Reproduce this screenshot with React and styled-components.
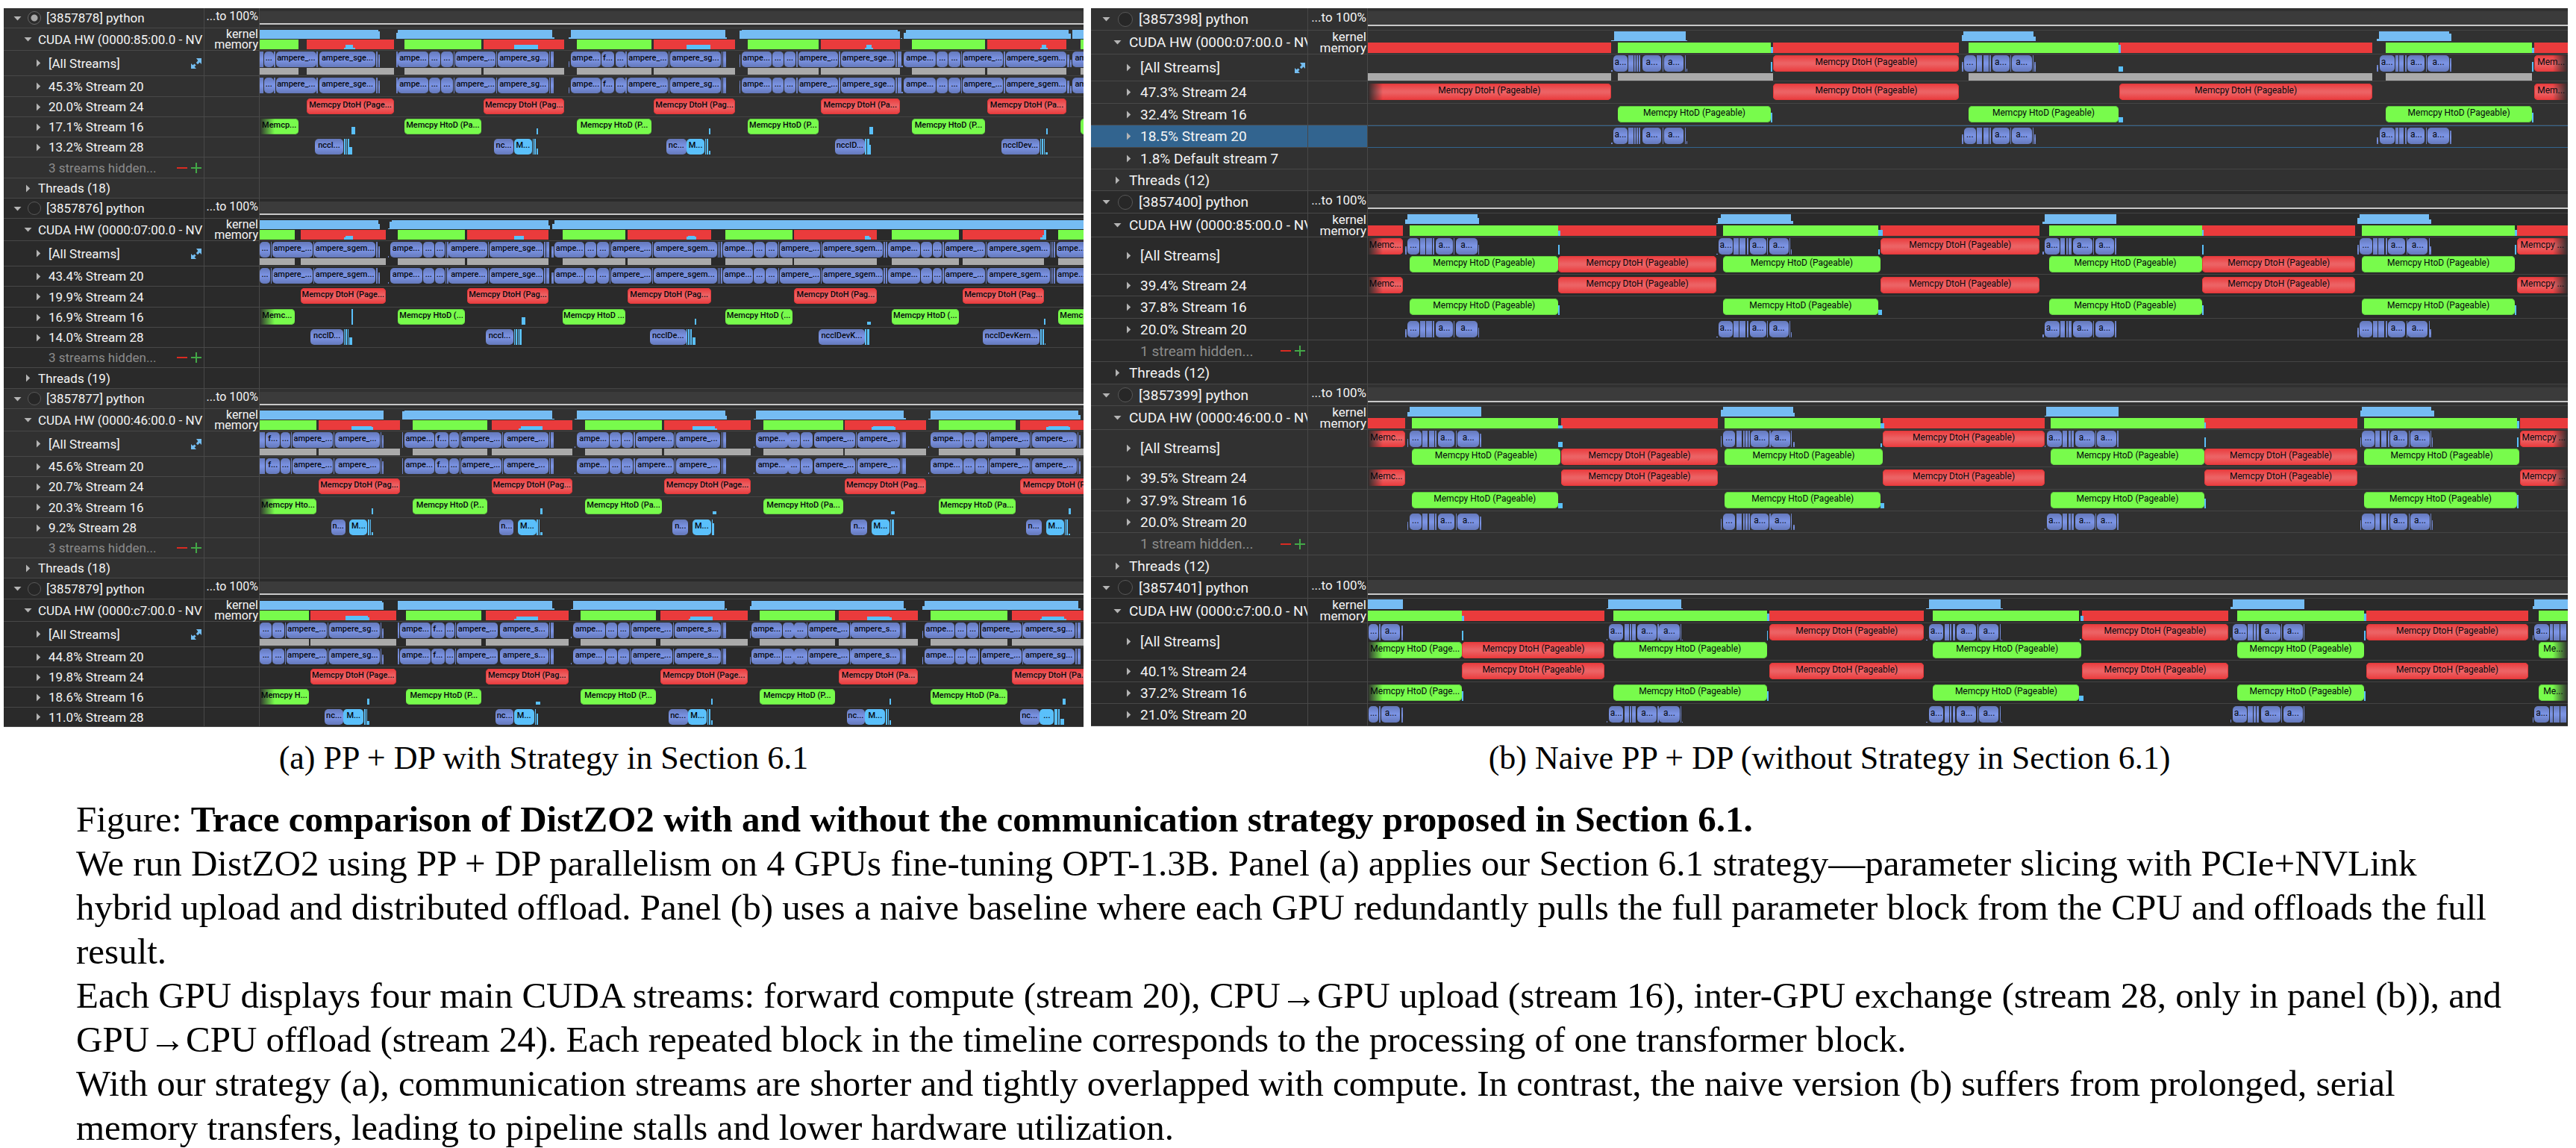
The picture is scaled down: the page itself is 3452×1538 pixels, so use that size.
import React from "react";
import styled, { createGlobalStyle, css } from "styled-components";

/* Times are in trace ticks. An event reads "start-end@height:label"; height is a percentage. */
const parse = (kind, source, extra = {}) =>
  source
    .split(";")
    .filter(Boolean)
    .map((item) => {
      const [, start, end, height, label] = item.match(/^(\d+)-(\d+)(?:@(\d+))?(?::(.*))?$/);
      return { kind, start: +start, end: +end, height: height ? +height : 100, label, ...extra };
    });

const kernels = (s) => parse("kernel", s);
const dtoh = (s, extra) => parse("dtoh", s, extra);
const htod = (s, extra) => parse("htod", s, extra);
const peer = (s) => parse("peer", s);
const usage = (s) => parse("usage", s);
const flat = (kind, events) => events.filter((e) => e.end - e.start > 12).map((e) => ({ ...e, kind, label: undefined, fade: undefined }));

const D = "Memcpy DtoH (Pageable)";
const H = "Memcpy HtoD (Pageable)";

const slicedProcess = ({ pid, bus, pinned, heights, shares, threads, busy, kernel, down, up, ticks, bumps, nccl, copies }) => {
  const k = kernels(kernel);
  const d = dtoh(down);
  const h = htod(up).map((e) => (e.start === 0 ? { ...e, fade: "left" } : e));
  const rows = [
    { type: "process", label: `[${pid}] python`, pinned },
    {
      type: "device",
      label: `CUDA HW (0000:${bus}:00.0 - NV`,
      lanes: [usage(busy), [...flat("downUse", d), ...flat("upUse", h), ...peer(bumps)]],
    },
    { type: "all", label: "[All Streams]", expand: true, lanes: [k, [...flat("merged", d), ...flat("merged", h)]], slimLast: true },
    { type: "stream", label: `${shares[0]}% Stream 20`, lanes: [k] },
    { type: "stream", label: `${shares[1]}% Stream 24`, lanes: [d] },
    { type: "stream", label: `${shares[2]}% Stream 16`, lanes: [[...h, ...peer(ticks)]] },
    { type: "stream", label: `${shares[3]}% Stream 28`, lanes: [[...kernels(nccl), ...peer(copies)]] },
  ];
  if (threads) {
    rows.push({ type: "hidden", label: "3 streams hidden..." }, { type: "threads", label: `Threads (${threads})` });
  }
  return rows.map((row, i) => ({ ...row, height: heights[i] }));
};

const leftGroups = [
  slicedProcess({
    pid: 3857878, bus: "85", pinned: true, threads: 18,
    heights: [27, 30, 34, 28, 27, 27, 27, 28, 27],
    shares: ["45.3", "20.0", "17.1", "13.2"],
    busy: "0-336;336-341@85;387-392@65;392-831;831-837@15;877-883@20;883-1321;1321-1326@15;1362-1368@90;1368-1812;1812-1818@85;1820-1824@10;1828-1834@70;1834-2297;2297-2303@60;2307-2339",
    kernel:
      "0-10;12-40:...;41-44;47-160:ampere_...;162-166;169-329:ampere_sge...;331-334;336-341@80;387-391;393-478:ampe...;480-513:...;515-548:...;550-553;556-669:ampere_...;671-674;676-819:ampere_sg...;821-824;826-835;877-880@40;883-968:ampe...;970-1007:f...;1010-1038:...;1039-1042;1045-1158:ampere_...;1160-1163;1166-1309:ampere_sg...;1311-1314;1316-1325;1362-1365@80;1368-1453:ampe...;1455-1487:...;1489-1522:...;1523-1527;1530-1643:ampere_...;1645-1648;1650-1804:ampere_sge...;1806-1809;1811-1821;1822-1826@10;1829-1920:ampe...;1922-1954:...;1956-1989:...;1991-1994;1996-2111:ampere_...;2113-2116;2118-2290:ampere_sgem...;2293-2298@80;2300-2306@50;2308-2399:ampe...",
    down: "134-381:Memcpy DtoH (Page...;636-865:Memcpy DtoH (Pag...;1119-1350:Memcpy DtoH (Pag...;1593-1817:Memcpy DtoH (Pa...;2066-2290:Memcpy DtoH (Pa...",
    up: "0-111:Memcp...;410-630:Memcpy HtoD (Pa...;900-1113:Memcpy HtoD (P...;1385-1587:Memcpy HtoD (P...;1852-2059:Memcpy HtoD (P...;2331-2545",
    ticks: "260-271@50;785-790@40;1275-1279@40;1731-1742@50;2233-2237@40",
    bumps: "239-272@18;243-265@45;722-791@45;1212-1280@45;1719-1742@18;1723-1738@45;2216-2237@18;2220-2234@45",
    nccl: "157-237:nccl...;665-721:nc...;1155-1211:nc...;1633-1718:ncclD...;2106-2214:ncclDev...",
    copies: "239-243;245-248;250-254;255-263@50;722-773:M...;775-778;780-783;785-790@40;1212-1263:M...;1265-1268;1270-1274;1275-1280@25;1719-1723;1725-1730;1731-1735@60;2216-2219;2221-2224;2226-2229;2231-2237@15",
  }),
  slicedProcess({
    pid: 3857876, bus: "07", threads: 19,
    heights: [27, 30, 34, 27, 28, 27, 27, 27, 28],
    shares: ["43.4", "19.9", "16.9", "14.0"],
    busy: "0-336;336-341@60;364-369@10;369-375@85;375-820;820-825@45;831-837@60;837-2339",
    kernel:
      "0-30:...;32-34;36-151:ampere_...;152-154;155-329:ampere_sgem...;331-334;336-341@70;364-367@10;370-461:ampe...;463-496:...;498-525:...;527-530;532-535;537-647:ampere...;649-651;653-806:ampere_sge...;808-811;813-822;829-834@70;837-922:ampe...;924-956:...;958-991:...;993-995;998-1113:ampere_...;1115-1117;1119-1298:ampere_sgem...;1300-1303;1305-1308;1310-1314;1316-1401:ampe...;1403-1435:...;1437-1470:...;1472-1474;1477-1592:ampere_...;1594-1596;1598-1770:ampere_sgem...;1772-1775;1777-1781;1784-1875:ampe...;1877-1909:...;1911-1937:...;1939-1942;1944-2059:ampere_...;2061-2063;2066-2243:ampere_sgem...;2245-2248;2250-2253;2255-2258;2262-2347:ampe...",
    down: "116-358:Memcpy DtoH (Page...;589-820:Memcpy DtoH (Pag...;1044-1281:Memcpy DtoH (Pag...;1518-1753:Memcpy DtoH (Pag...;1996-2227:Memcpy DtoH (Pag...",
    up: "0-99:Memc...;392-583:Memcpy HtoD (...;860-1038:Memcpy HtoD ...;1321-1512:Memcpy HtoD (...;1794-1985:Memcpy HtoD (...;2267-2458:Memcpy HtoD (...",
    ticks: "260-264;744-755@50;1235-1240@40;1724-1735@20;2227-2232@40",
    bumps: "239-265@20;243-265@38;722-750@40;1212-1240@30;1217-1235@42;1719-1736@20;1719-1731@42;2216-2228@20;2222-2228@50;2227-2233@100",
    nccl: "145-237:ncclD...;641-721:nccl...;1108-1211:ncclDe...;1587-1718:ncclDevK...;2054-2214:ncclDevKern...",
    copies: "239-242;244-247;249-253;254-263@50;722-725;727-730;732-736;738-743;1212-1215;1217-1220;1222-1226;1228-1237@50;1719-1723;1725-1730;2216-2220;2222-2226;2228-2232@10",
  }),
  slicedProcess({
    pid: 3857877, bus: "46", threads: 18,
    heights: [27, 30, 34, 27, 27, 28, 27, 27, 27],
    shares: ["45.6", "20.7", "20.3", "9.2"],
    busy: "0-352;405-410@90;410-831;831-837@10;895-900@10;900-1321;1321-1326@40;1402-1408@10;1408-1829;1829-1835@20;1898-1904@10;1904-2325;2325-2331@50",
    kernel:
      "0-14;17-58:f...;60-86:...;88-91;94-208:ampere_...;210-212;214-341:ampere_...;343-346;348-351@80;404-407;410-496:ampe...;498-536:f...;538-565:...;567-569;571-686:ampere_...;688-690;693-819:ampere_...;821-824;826-835;894-897@10;901-992:ampe...;994-1025:...;1027-1060:...;1062-1065;1068-1176:ampere...;1178-1180;1183-1308:ampere_...;1311-1314;1316-1325;1402-1405@10;1408-1499:ampe...;1501-1533:...;1535-1569:...;1571-1573;1575-1690:ampere_...;1692-1694;1697-1818:ampere_...;1820-1823;1825-1834;1898-1901@10;1905-1995:ampe...;1997-2029:...;2031-2065:...;2067-2069;2071-2186:ampere_...;2188-2190;2192-2319:ampere_...;2321-2324;2326-2331@80",
    down: "168-398:Memcpy DtoH (Pag...;658-888:Memcpy DtoH (Pag...;1148-1395:Memcpy DtoH (Page...;1661-1891:Memcpy DtoH (Pag...;2158-2398:Memcpy DtoH (Pag...",
    up: "0-161:Memcpy Hto...;434-647:Memcpy HtoD (P...;924-1142:Memcpy HtoD (Pa...;1431-1656:Memcpy HtoD (Pa...;1927-2146:Memcpy HtoD (Pa...",
    ticks: "318-323@40;797-802@40;1285-1297@20;1793-1804@20;2297-2302@40",
    bumps: "260-323@30;260-317@42;735-802@15;741-802@42;1229-1299@15;1229-1293@42;1737-1805@30;1742-1800@42;2233-2301@30;2239-2296@42",
    nccl: "203-243:n...;681-721:n...;1172-1217:n...;1679-1725:n...;2175-2220:n...",
    copies: "255-306:M...;308-311;313-316;318-323@20;734-785:M...;787-790;792-795;797-802@20;1229-1281:M...;1283-1286;1287-1291@75;1737-1788:M...;1790-1793;1795-1800;2233-2284:M...;2286-2289;2291-2295;2297-2301@10",
  }),
  slicedProcess({
    pid: 3857879, bus: "c7",
    heights: [28, 30, 34, 27, 27, 27, 26],
    shares: ["44.8", "19.8", "18.6", "11.0"],
    busy: "0-347;347-352@80;393-831;831-837@15;883-889@10;889-1321;1321-1326@15;1391-1396@40;1396-1829;1829-1835@15;1881-1887@40;1887-2325;2325-2331@20",
    kernel:
      "1-34:...;36-70:...;72-74;76-191:ampere_...;193-195;197-341:ampere_sg...;343-346;348-351@60;392-396;399-485:ampe...;487-525:f...;527-554:...;556-558;560-675:ampere_...;677-679;682-819:ampere_s...;821-824;826-835;883-886@10;889-980:ampe...;982-1014:...;1016-1049:...;1051-1053;1056-1171:ampere_...;1173-1175;1177-1309:ampere_s...;1311-1314;1316-1325;1391-1394@50;1397-1483:ampe...;1485-1516:...;1518-1552:...;1554-1556;1557-1673:ampere_...;1675-1677;1678-1818:ampere_s...;1820-1823;1825-1834;1881-1884@50;1887-1973:ampe...;1975-2006:...;2008-2041:...;2043-2045;2048-2163:ampere_...;2165-2167;2168-2314:ampere_sg...;2316-2319;2321-2331",
    down: "144-387:Memcpy DtoH (Page...;641-877:Memcpy DtoH (Pag...;1137-1385:Memcpy DtoH (Page...;1644-1869:Memcpy DtoH (Pa...;2135-2360:Memcpy DtoH (Pa...",
    up: "0-139:Memcpy H...;416-630:Memcpy HtoD (P...;911-1125:Memcpy HtoD (P...;1419-1633:Memcpy HtoD (P...;1904-2123:Memcpy HtoD (Pa...",
    ticks: "306-311@40;784-796@20;1281-1285@40;1788-1793@40;2279-2288@40",
    bumps: "243-312@30;243-307@45;723-791@15;728-791@42;1218-1286@15;1223-1286@42;1725-1794@30;1725-1789@42;2216-2290@15;2221-2284@42",
    nccl: "185-237:nc...;670-721:nc...;1160-1216:nc...;1667-1718:nc...;2158-2214:nc...",
    copies: "238-295:M...;297-300;302-305;306-311@25;722-779:M...;781-784;786-790@70;1217-1269:M...;1271-1274;1276-1279;1281-1285@30;1719-1776:M...;1778-1781;1783-1787;1788-1793@30;2215-2255:...;2256-2264;2266-2272;2273-2283@40",
  }),
];

const firstNaive = () => {
  const k = kernels(
    "511-514@10;515-545:a...;547-557;559-562;564-567;569-572;576-616:a...;618-620;621-663:a...;665-667;668-670@20;1246-1249@60;1251-1276:...;1278-1289;1292-1303;1305-1308;1310-1346:a...;1348-1350;1351-1393:a...;1395-1397;1398-1401@60;2117-2120@40;2123-2154:a...;2156-2162;2164-2174;2176-2179;2182-2218:a...;2220-2222;2224-2269:a...;2271-2274@80"
  );
  const head = dtoh(`0-510:${D}`, { fade: "left" });
  const mid = dtoh(`851-1241:${D}`);
  const late = dtoh(`1577-2108:${D}`);
  const tail = dtoh("2448-2518:Mem...", { fade: "right" });
  const up = htod(`524-846:${H};1260-1576:${H};2136-2443:${H}`);
  const ticks = peer("846-849@60;1576-1584@30;2443-2446@60");
  const down = [...head, ...mid, ...late, ...tail];
  return [
    { type: "process", label: "[3857398] python", height: 30 },
    {
      type: "device", label: "CUDA HW (0000:07:00.0 - NV", height: 32,
      lanes: [
        usage("511-516@5;516-667;667-671@5;1246-1250@60;1250-1397;1397-1402@50;2117-2122@25;2122-2269;2269-2274@80"),
        [...flat("downUse", down), ...flat("upUse", up), ...peer("846-850@60;1576-1580@80;2443-2447@50")],
      ],
    },
    {
      type: "all", label: "[All Streams]", expand: true, height: 36, slimLast: true,
      lanes: [[...k, ...mid, ...tail, ...ticks], parse("merged", "0-510;524-850;1260-2108;2136-2443")],
    },
    { type: "stream", label: "47.3% Stream 24", height: 30, lanes: [down] },
    { type: "stream", label: "32.4% Stream 16", height: 29, lanes: [[...up, ...ticks]] },
    { type: "stream", label: "18.5% Stream 20", height: 30, lanes: [k], selected: true },
    { type: "stream", label: "1.8% Default stream 7", height: 29 },
    { type: "threads", label: "Threads (12)", height: 29 },
  ];
};

const naiveProcess = ({ pid, bus, heights, shares, hidden, busy, use, kernel, upper, lower, down, up, ticks, upperTicks }) => {
  const k = kernels(kernel);
  const edge = (events) =>
    events.map((e) => (e.start === 0 ? { ...e, fade: "left" } : e.end === 2518 ? { ...e, fade: "right" } : e));
  const copies = ({ d = "", h = "" }) => edge([...dtoh(d), ...htod(h)]);
  const rows = [
    { type: "process", label: `[${pid}] python` },
    {
      type: "device", label: `CUDA HW (0000:${bus}:00.0 - NV`,
      lanes: [usage(busy), [...flat("downUse", dtoh(down)), ...flat("upUse", htod(up)), ...peer(use)]],
    },
    { type: "all", label: "[All Streams]", lanes: [[...k, ...copies(upper), ...peer(upperTicks)], copies(lower)] },
    { type: "stream", label: `${shares[0]}% Stream 24`, lanes: [edge(dtoh(down))] },
    { type: "stream", label: `${shares[1]}% Stream 16`, lanes: [[...edge(htod(up)), ...peer(ticks)]] },
    { type: "stream", label: `${shares[2]}% Stream 20`, lanes: [k] },
  ];
  if (hidden) rows.push({ type: "hidden", label: "1 stream hidden..." }, { type: "threads", label: "Threads (12)" });
  return rows.map((row, i) => ({ ...row, height: heights[i] }));
};

const rightGroups = [
  firstNaive(),
  naiveProcess({
    pid: 3857400, bus: "85", hidden: true,
    heights: [30, 32, 50, 29, 30, 29, 29, 30],
    shares: ["39.4", "37.8", "20.0"],
    busy: "79-83@50;83-230;230-234@60;731-735@5;735-740@60;740-888;888-892@30;1416-1420@20;1420-1571;2076-2081@60;2081-2227;2227-2232@50",
    use: "400-404@50;1071-1080@60;1750-1754@60;2407-2411@60",
    kernel:
      "78-81@50;83-108:...;110-120;122-135;137-140;143-178:a...;180-182;184-230:a...;231-234@60;731-734@5;736-766:a...;768-778;780-792;795-798;801-836:a...;838-840;842-883:a...;885-887;888-890@30;1416-1418@20;1420-1451:a...;1453-1463;1465-1469;1471-1477;1480-1520:a...;1522-1524;1526-1566:a...;1568-1571;2076-2079@60;2081-2107:...;2109-2119;2121-2133;2136-2139;2141-2177:a...;2179-2181;2182-2224:a...;2226-2228;2229-2231@50",
    upper: { d: `0-73:Memc...;1076-1410:${D};2411-2518:Memcpy ...` },
    upperTicks: "400-403@60;1071-1074@30;1750-1754@60;2407-2410@60",
    lower: { d: `400-731:${D};1751-2072:${D}`, h: `88-400:${H};745-1076:${H};1429-1750:${H};2086-2407:${H}` },
    down: `0-73:Memc...;400-731:${D};1076-1410:${D};1751-2072:${D};2411-2518:Memcpy ...`,
    up: `88-400:${H};745-1071:${H};1429-1750:${H};2086-2407:${H}`,
    ticks: "400-403@60;1071-1079@30;1750-1754@60;2407-2410@60",
  }),
  naiveProcess({
    pid: 3857399, bus: "46", hidden: true,
    heights: [29, 32, 50, 30, 29, 29, 30, 29],
    shares: ["39.5", "37.9", "20.0"],
    busy: "83-88@50;88-238;741-745@70;745-892;892-896@40;1420-1424@10;1424-1576;2082-2086@60;2086-2232;2232-2237@60",
    use: "399-408@30;1076-1084@50;1755-1759@60;2411-2416@70",
    kernel:
      "83-85@50;87-113:...;115-126;128-139;141-144;147-182:a...;184-186;188-234:a...;235-238@80;741-743@70;745-771:...;773-785;787-791;793-797;799-802;804-841:a...;843-845;846-886:a...;888-890;892-895@30;1420-1422@10;1425-1456:a...;1458-1468;1470-1475;1477-1482;1484-1525:a...;1527-1529;1530-1570:a...;1572-1575;2082-2084@60;2086-2112:...;2114-2124;2127-2138;2140-2143;2146-2182:a...;2184-2186;2187-2229:a...;2230-2232;2233-2235@60",
    upper: { d: `0-78:Memc...;1081-1420:${D};2417-2518:Memcpy ...` },
    upperTicks: "400-408@30;1076-1079@25;1755-1758@60;2411-2415@60",
    lower: { d: `405-735:${D};1756-2076:${D}`, h: `92-404:${H};749-1080:${H};1433-1755:${H};2091-2416:${H}` },
    down: `0-78:Memc...;405-735:${D};1081-1420:${D};1756-2076:${D};2417-2518:Memcpy ...`,
    up: `92-399:${H};749-1076:${H};1433-1755:${H};2091-2411:${H}`,
    ticks: "399-408@30;1076-1084@30;1755-1758@60;2411-2415@80",
  }),
  naiveProcess({
    pid: 3857401, bus: "c7",
    heights: [29, 33, 50, 29, 29, 30],
    shares: ["40.1", "37.2", "21.0"],
    busy: "0-73;501-505@10;505-658;658-661@5;1172-1177@5;1177-1328;1328-1332@5;1810-1815@20;1815-1966;2444-2448@30;2448-2518",
    use: "197-202@50;837-842@70;1495-1502@50;2090-2095@70",
    kernel:
      "2-22:...;24-26;28-68:a...;70-73@90;501-503@10;506-536:a...;538-548;550-553;555-562;566-606:a...;608-610;611-654:a...;656-658;659-661@5;1172-1174@5;1178-1208:a...;1210-1220;1222-1225;1227-1233;1236-1277:a...;1279-1281;1283-1324:a...;1326-1328;1329-1331@5;1810-1812@20;1815-1845:a...;1847-1857;1859-1863;1865-1870;1874-1915:a...;1917-1919;1921-1962:a...;1964-1966;2444-2446@30;2448-2479:a...;2481-2487;2489-2501;2503-2515",
    upper: { d: `843-1167:${D};1498-1806:${D};2095-2435:${D}` },
    upperTicks: "198-201@60;837-840@60;1494-1497@10;2091-2094@60",
    lower: { d: `198-497:${D}`, h: `0-198:Memcpy HtoD (Page...;515-837:${H};1186-1497:${H};1824-2091:${H};2457-2518:Me...` },
    down: `198-497:${D};843-1167:${D};1498-1806:${D};2095-2435:${D}`,
    up: `0-198:Memcpy HtoD (Page...;515-837:${H};1186-1493:${H};1824-2091:${H};2457-2518:Me...`,
    ticks: "198-201@60;838-841@60;1493-1501@30;2091-2094@60",
  }),
];

const compact = {
  ticks: 2339, font: 17, small: 16, smallLine: 14, tiny: 11, tinyWeight: 500, labelCol: 269, valueCol: 74,
  indents: [11, 25, 39], arrow: 14, gap: 7, dial: 18,
  bar: 21, slim: 9, laneGap: 1, kernelUse: 12, memoryUse: 13, useTop: 2, streamTop: 2, allTop: 1, textLine: 18,
  bandTop: 4, band: 16,
};
const roomy = {
  ticks: 2518, font: 19, small: 17, smallLine: 15, tiny: 12, tinyWeight: 400, labelCol: 291, valueCol: 80,
  indents: [12, 27, 42], arrow: 16, gap: 8, dial: 20,
  bar: 22, slim: 10, laneGap: 2, kernelUse: 13, memoryUse: 14, useTop: 1, streamTop: 3, allTop: 1, textLine: 19,
  bandTop: 4, band: 18,
};

const GlobalStyle = createGlobalStyle`
  *, *::before, *::after { box-sizing: border-box; }
  body { margin: 0; background: #fff; }
`;

const Page = styled.main`
  padding: 11px 11px 0 5px;
  color: #000;
  font-family: "Liberation Serif", "Times New Roman", serif;
`;

const Comparison = styled.div`
  display: grid;
  grid-template-columns: minmax(0, 1447fr) minmax(0, 1979fr);
  gap: 10px;
`;

const Figure = styled.figure`
  margin: 0;
  display: flex;
  flex-direction: column;
  justify-content: space-between;
`;

const Caption = styled.figcaption`
  padding-top: 13px;
  font-size: 44px;
  line-height: 58px;
  text-align: center;
`;

const Trace = styled.div`
  overflow: hidden;
  background: #2a2a2a;
  color: #f4f4f4;
  font-family: Roboto, "Liberation Sans", sans-serif;
`;

const Group = styled.section`
  background: ${(p) => (p.$dark ? "#2a2a2a" : "#313131")};
`;

const Row = styled.div`
  display: grid;
  grid-template-columns: ${(p) => p.$s.labelCol}px ${(p) => p.$s.valueCol}px minmax(0, 1fr);
  height: ${(p) => p.$h}px;
`;

const cell = css`
  border-bottom: 1px solid #484848;
  background: ${(p) => (p.$selected ? "#32648f" : "transparent")};
`;

const LabelCell = styled.div`
  ${cell}
  display: flex;
  align-items: center;
  gap: ${(p) => p.$s.gap}px;
  padding-left: ${(p) => p.$s.indents[p.$level]}px;
  border-right: 1px solid #484848;
  overflow: hidden;
  white-space: nowrap;
  font-size: ${(p) => p.$s.font}px;
  color: ${(p) => (p.$muted ? "#8c8c8c" : "inherit")};
`;

const PlainButton = styled.button`
  flex: none;
  display: flex;
  align-items: center;
  justify-content: center;
  padding: 0;
  border: 0;
  background: none;
  cursor: pointer;
`;

const Arrow = styled(PlainButton)`
  width: ${(p) => p.$s.arrow}px;
  height: 20px;
`;

const Spacer = styled.span`
  flex: none;
  width: ${(p) => p.$s.arrow}px;
`;

const Name = styled.span`
  flex: 1 0 auto;
`;

const ProcessName = styled.label`
  display: flex;
  align-items: center;
  gap: ${(p) => p.$s.gap}px;
`;

const Dial = styled.input`
  appearance: none;
  margin: 0;
  width: ${(p) => p.$s.dial}px;
  height: ${(p) => p.$s.dial}px;
  border: 1px solid #585858;
  border-radius: 50%;
  background: #272727;
  &:checked {
    border-color: #686868;
    background: radial-gradient(circle, #a8a8a8 0 4px, #2b2b2b 5px);
  }
`;

const Tools = styled.span`
  flex: none;
  display: flex;
  gap: 5px;
  padding-right: 3px;
`;

const ValueCell = styled.div`
  ${cell}
  display: flex;
  flex-direction: column;
  justify-content: center;
  align-items: flex-end;
  padding-right: 1px;
  padding-bottom: ${(p) => (p.$lift ? 5 : 0)}px;
  border-right: 1px solid #484848;
  font-size: ${(p) => p.$s.small}px;
  line-height: ${(p) => p.$s.smallLine}px;
  white-space: nowrap;
`;

const Track = styled.div`
  display: flex;
  flex-direction: column;
  gap: ${(p) => p.$gap}px;
  padding-top: ${(p) => p.$top}px;
  overflow: hidden;
  border-bottom: 1px solid ${(p) => (p.$selected ? "#32648f" : "#444")};
  box-shadow: ${(p) => (p.$selected ? "inset 0 1px #32648f" : "none")};
`;

const Utilisation = styled.div`
  height: ${(p) => p.$s.band + 2}px;
  background: #3b3b3b;
  border-bottom: 2px solid #c8c8c8;
`;

const Lane = styled.div`
  position: relative;
  flex: none;
  height: ${(p) => p.$h}px;
`;

const looks = {
  kernel: css`
    background: linear-gradient(#6478ba, #7b93e3 45%, #7b93e3 55%, #6478ba);
  `,
  dtoh: css`
    background: linear-gradient(#ea3a3c, #ec6264 45%, #ec6264 55%, #ea3a3c);
    box-shadow: inset 0 0 0 1px #e2383a;
  `,
  htod: css`
    background: #78fb4c;
    box-shadow: inset 0 1px #5fc63e, inset 0 -1px #66d244;
  `,
  peer: css`
    background: #5ac0fb;
  `,
  usage: css`
    background: #75bcf3;
  `,
  downUse: css`
    background: #ea3b3c;
  `,
  upUse: css`
    background: #78fb4c;
  `,
  merged: css`
    background: #aaa;
  `,
};

const rounded = ["kernel", "dtoh", "htod", "peer"];

const Event = styled.div`
  position: absolute;
  bottom: 0;
  overflow: hidden;
  color: #05070c;
  font-size: ${(p) => p.$s.tiny}px;
  font-weight: ${(p) => p.$s.tinyWeight};
  line-height: ${(p) => p.$s.textLine}px;
  text-align: center;
  white-space: nowrap;
  ${(p) => looks[p.$kind]}
  border-radius: ${(p) => (p.$round ? 5 : 0)}px;
  ${(p) =>
    p.$fade &&
    css`
      border-radius: ${p.$fade === "left" ? "0 5px 5px 0" : "5px 0 0 5px"};
      &::before {
        content: "";
        position: absolute;
        inset: 0;
        background: linear-gradient(to ${p.$fade === "left" ? "right" : "left"}, #2d2d2d, transparent 20px);
      }
    `}
`;

const EventName = styled.span`
  position: relative;
`;

const Figcopy = styled.section`
  padding: 23px 76px 0 97px;
  font-size: 49px;
  line-height: 59px;
`;

const Title = styled.h1`
  margin: 0;
  font-size: inherit;
  font-weight: 400;
`;

const Paragraph = styled.p`
  margin: 0;
`;

const Triangle = ({ open }) => (
  <svg width="11" height="11" viewBox="0 0 11 11" aria-hidden="true">
    <path d={open ? "M0.5 3h10L5.5 8.5z" : "M3 0.5v10L8.2 5.5z"} fill="#b4b4b4" />
  </svg>
);

const ExpandIcon = () => (
  <svg width="14" height="14" viewBox="0 0 14 14" aria-hidden="true">
    <path d="M7 0h7v8l-2.4-2.4L9 8.2 6.9 6 9.3 3.2zM7 14H0V7l2.4 2.2L4.6 7.4l2 2L4.6 11.4z" fill="#74bdf0" />
  </svg>
);

const MinusIcon = () => (
  <svg width="14" height="14" viewBox="0 0 14 14" aria-hidden="true">
    <path d="M0 7h14" stroke="#d92b22" strokeWidth="2" />
  </svg>
);

const PlusIcon = () => (
  <svg width="14" height="14" viewBox="0 0 14 14" aria-hidden="true">
    <path d="M0 7h14M7 0v14" stroke="#43a847" strokeWidth="2" />
  </svg>
);

const levels = { process: 0, device: 1, threads: 1, all: 2, stream: 2, hidden: 2 };

const laneHeight = (row, index, s) => {
  if (row.type === "device") return index === 0 ? s.kernelUse : s.memoryUse;
  if (row.slimLast && index === row.lanes.length - 1) return s.slim;
  return s.bar;
};

const TrackContent = ({ row, s }) => {
  if (row.type === "process") return <Utilisation $s={s} />;
  return (row.lanes || []).map((lane, index) => (
    <Lane key={index} $h={laneHeight(row, index, s)}>
      {lane.map((e, i) => (
        <Event
          key={i}
          $s={s}
          $kind={e.kind}
          $fade={e.fade}
          $round={rounded.includes(e.kind) && e.end - e.start > 18 && e.height === 100}
          style={{
            left: `${(e.start / s.ticks) * 100}%`,
            width: `${((e.end - e.start) / s.ticks) * 100}%`,
            height: `${e.height}%`,
          }}
        >
          {e.label && <EventName>{e.label}</EventName>}
        </Event>
      ))}
    </Lane>
  ));
};

const trackTop = (type, s) =>
  ({ process: s.bandTop, device: s.useTop, all: s.allTop, stream: s.streamTop }[type] || 0);

const TraceRow = ({ row, s, name }) => {
  const isProcess = row.type === "process";
  const open = isProcess || row.type === "device";
  return (
    <Row $s={s} $h={row.height}>
      <LabelCell $s={s} $level={levels[row.type]} $muted={row.type === "hidden"} $selected={row.selected}>
        {row.type === "hidden" ? (
          <Spacer $s={s} />
        ) : (
          <Arrow $s={s} type="button" aria-expanded={open} aria-label={`Toggle ${row.label}`}>
            <Triangle open={open} />
          </Arrow>
        )}
        {isProcess ? (
          <ProcessName $s={s}>
            <Dial $s={s} type="radio" name={name} defaultChecked={row.pinned} />
            {row.label}
          </ProcessName>
        ) : (
          <Name>{row.label}</Name>
        )}
        {row.expand && (
          <Tools>
            <PlainButton type="button" aria-label="Expand streams">
              <ExpandIcon />
            </PlainButton>
          </Tools>
        )}
        {row.type === "hidden" && (
          <Tools>
            <PlainButton type="button" aria-label="Show fewer streams">
              <MinusIcon />
            </PlainButton>
            <PlainButton type="button" aria-label="Show more streams">
              <PlusIcon />
            </PlainButton>
          </Tools>
        )}
      </LabelCell>
      <ValueCell $s={s} $lift={isProcess} $selected={row.selected}>
        {isProcess && <span>...to 100%</span>}
        {row.type === "device" && (
          <>
            <span>kernel</span>
            <span>memory</span>
          </>
        )}
      </ValueCell>
      <Track $gap={s.laneGap} $top={trackTop(row.type, s)} $selected={row.selected}>
        <TrackContent row={row} s={s} />
      </Track>
    </Row>
  );
};

const TracePanel = ({ groups, scale, name, caption }) => (
  <Figure>
    <Trace>
      {groups.map((rows, g) => (
        <Group key={g} $dark={g % 2 === 1}>
          {rows.map((row, r) => (
            <TraceRow key={r} row={row} s={scale} name={name} />
          ))}
        </Group>
      ))}
    </Trace>
    <Caption>{caption}</Caption>
  </Figure>
);

export default function App() {
  return (
    <Page>
      <GlobalStyle />
      <Comparison>
        <TracePanel groups={leftGroups} scale={compact} name="sliced" caption="(a) PP + DP with Strategy in Section 6.1" />
        <TracePanel groups={rightGroups} scale={roomy} name="naive" caption="(b) Naive PP + DP (without Strategy in Section 6.1)" />
      </Comparison>
      <Figcopy>
        <Title>
          Figure: <strong>Trace comparison of DistZO2 with and without the communication strategy proposed in Section 6.1.</strong>
        </Title>
        <Paragraph>
          We run DistZO2 using PP + DP parallelism on 4 GPUs fine-tuning OPT-1.3B. Panel (a) applies our Section 6.1
          strategy—parameter slicing with PCIe+NVLink hybrid upload and distributed offload. Panel (b) uses a naive
          baseline where each GPU redundantly pulls the full parameter block from the CPU and offloads the full result.
        </Paragraph>
        <Paragraph>
          Each GPU displays four main CUDA streams: forward compute (stream 20), CPU→GPU upload (stream 16), inter-GPU
          exchange (stream 28, only in panel (b)), and GPU→CPU offload (stream 24). Each repeated block in the timeline
          corresponds to the processing of one transformer block.
        </Paragraph>
        <Paragraph>
          With our strategy (a), communication streams are shorter and tightly overlapped with compute. In contrast, the
          naive version (b) suffers from prolonged, serial memory transfers, leading to pipeline stalls and lower
          hardware utilization.
        </Paragraph>
      </Figcopy>
    </Page>
  );
}
